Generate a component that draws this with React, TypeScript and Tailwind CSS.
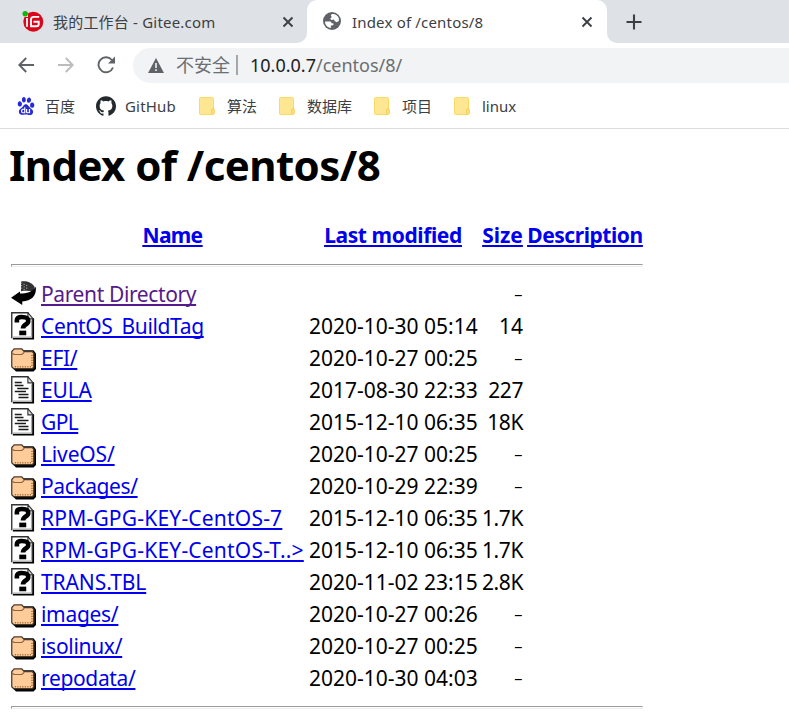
import React from "react";
import { SiBaidu, SiGithub } from "react-icons/si";

type Kind = "back" | "unknown" | "folder" | "text";

interface Entry {
  kind: Kind;
  name: string;
  track: string;
  date: string;
  size: string;
}

const entries: Entry[] = [
  { kind: "back", name: "Parent Directory", track: "tracking-[-0.38px]", date: "", size: "-" },
  { kind: "unknown", name: "CentOS_BuildTag", track: "tracking-[-0.35px]", date: "2020-10-30 05:14", size: "14" },
  { kind: "folder", name: "EFI/", track: "tracking-[-0.3px]", date: "2020-10-27 00:25", size: "-" },
  { kind: "text", name: "EULA", track: "tracking-[-0.2px]", date: "2017-08-30 22:33", size: "227" },
  { kind: "text", name: "GPL", track: "tracking-[-0.6px]", date: "2015-12-10 06:35", size: "18K" },
  { kind: "folder", name: "LiveOS/", track: "tracking-[-0.15px]", date: "2020-10-27 00:25", size: "-" },
  { kind: "folder", name: "Packages/", track: "tracking-[-0.4px]", date: "2020-10-29 22:39", size: "-" },
  { kind: "unknown", name: "RPM-GPG-KEY-CentOS-7", track: "tracking-[0.2px]", date: "2015-12-10 06:35", size: "1.7K" },
  { kind: "unknown", name: "RPM-GPG-KEY-CentOS-T..>", track: "tracking-[0.2px]", date: "2015-12-10 06:35", size: "1.7K" },
  { kind: "unknown", name: "TRANS.TBL", track: "tracking-[-0.1px]", date: "2020-11-02 23:15", size: "2.8K" },
  { kind: "folder", name: "images/", track: "tracking-[-0.3px]", date: "2020-10-27 00:26", size: "-" },
  { kind: "folder", name: "isolinux/", track: "tracking-[-0.3px]", date: "2020-10-27 00:25", size: "-" },
  { kind: "folder", name: "repodata/", track: "tracking-[-0.35px]", date: "2020-10-30 04:03", size: "-" },
];

function Page({ children }: { children: React.ReactNode }) {
  return (
    <>
      <path d="M1 1H14L18 5.5V21H1Z" fill="#fff" />
      <path d="M17.7 5V21.3H1.5" fill="none" stroke="#000" strokeWidth="1.5" />
      <path d="M.6 21V.6H14" fill="none" stroke="#333" strokeWidth="1.1" />
      <path d="M13.5 .5V5.5H17.8Z" fill="#ddd" stroke="#333" strokeWidth=".9" />
      <path d="M1.5 20H16.4V6.5" fill="none" stroke="#aaa" strokeWidth=".9" />
      {children}
    </>
  );
}

function FileIcon({ kind }: { kind: Kind }) {
  return (
    <svg viewBox="0 0 20 22" className="mb-[2px] block h-[27.5px] w-[25px]">
      {kind === "back" && (
        <>
          <path d="M8 1.2C12 .4 17 2 19 5.6L18 9C15 8.6 11 8.4 8 9Z" fill="#333" />
          <path d="M8 2.5H9M8 4.5H9M8 6.5H9M10 3.5H11M10 5.5H11M10 7.5H11M12 4.5H13M12 6.5H13" stroke="#aaa" strokeWidth=".8" />
          <path d="M19.9 5.8C20.4 12.5 17 16.6 9 17.2V20L0 14.2L7.2 9.2V10.8C12.5 10.8 17.2 9.6 19.4 5.8Z" fill="#000" />
        </>
      )}
      {kind === "unknown" && (
        <Page>
          <path d="M4.7 8.4V6.6C4.7 4.6 6 4 8.6 4C12.2 4 13.8 4.8 13.8 7.2C13.8 10.4 9.6 9.6 9.6 13.2" fill="none" stroke="#000" strokeWidth="3.7" />
          <path d="M6.6 14.9H12.2V18.6H6.6Z" fill="#000" />
        </Page>
      )}
      {kind === "text" && (
        <Page>
          <path d="M3 5.2H8.6M3 7.6H10M5 10H14M3 12.4H12M6 14.8H14M6 17.2H14" stroke="#1a1a1a" strokeWidth="1.3" />
          <path d="M3 6.4H9" stroke="#bbb" strokeWidth=".8" />
        </Page>
      )}
      {kind === "folder" && (
        <>
          <path d="M2 5H18L20 7.5V20L18 22H4L2 20Z" fill="#000" />
          <path d="M.6 6L2.6 3.9H8.6L10.6 6H17L18.2 7.4V18.5L17 19.6H2L.6 18.2Z" fill="#fc9" stroke="#4a3a2c" strokeWidth="1" />
          <path d="M1 7.2L2.3 8.4H8.7L10.6 6.6" fill="none" stroke="#8a6544" strokeWidth=".9" />
          <path d="M3 18.2H16.5" stroke="#a87448" strokeWidth="1.3" strokeDasharray="1 1" />
          <path d="M16.8 8.5V18" stroke="#a87448" strokeWidth="1.3" strokeDasharray="1 1" />
        </>
      )}
    </svg>
  );
}

function Cross() {
  return (
    <svg viewBox="0 0 12 12" className="block size-3">
      <path d="M1.5 1.5L10.5 10.5M10.5 1.5L1.5 10.5" stroke="#3c4043" strokeWidth="1.9" />
    </svg>
  );
}

function FolderMark() {
  return (
    <svg viewBox="0 0 16 18" className="block h-[18px] w-4">
      <rect x=".5" y=".5" width="14" height="17" rx="1" fill="#ffe693" stroke="#fbd964" />
      <rect x="12.7" y="11.7" width="2.6" height="5.3" rx=".8" fill="#ffe180" stroke="#f3cc4c" strokeWidth=".9" />
    </svg>
  );
}

function Rule() {
  return <div className="h-[3px] w-[632px] border border-t-[#9a9a9a] border-r-[#eee] border-b-[#eee] border-l-[#9a9a9a]" />;
}

const columns = "grid grid-cols-[26px_264px_169px_41px_116px] gap-x-1";

export default function App() {
  return (
    <div className="h-[720px] w-[789px] overflow-hidden bg-white font-['Noto_Sans','Noto_Sans_CJK_SC',sans-serif] whitespace-nowrap text-black">
      <div className="flex h-[43px] bg-[#dee1e6] text-[15px] text-[#3c4043]">
        <div className="flex w-[307px] items-center bg-white">
          <div className="flex h-full w-full items-center rounded-br-[10px] bg-[#dee1e6] pl-[22px]">
            <svg viewBox="0 0 22 22" className="size-[22px]">
              <circle cx="11.3" cy="10.7" r="10" fill="#d9071b" />
              <path d="M17.2 5.9H11.7Q9 5.9 9 8.6V15.3H14.6Q16.7 15.3 16.7 13.2V10.7H11.5" fill="none" stroke="#fff" strokeWidth="1.9" />
              <path d="M5 7V15.8" stroke="#fff" strokeWidth="1.8" />
              <path d="M0 0H6V6H0Z" fill="#dee1e6" />
              <circle cx="3.2" cy="2.8" r="2.7" fill="#0cb80c" />
            </svg>
            <span className="ml-[9px] w-[229px] pt-px tracking-[0.2px]">我的工作台 - Gitee.com</span>
            <Cross />
          </div>
        </div>
        <div className="flex w-[300px] items-center rounded-t-[10px] bg-white pl-[16px]">
          <svg viewBox="0 0 18 18" className="mb-px size-[18px]">
            <circle cx="9" cy="9" r="9" fill="#5f6368" />
            <path d="M8.6 2.2C12 1.6 14.8 3.4 15.8 6.2L15.9 9L13.6 10.2L11.6 8.9L10.9 7.6L8.2 8L7.2 6.4L8.8 5.2L7.8 3.6ZM2 9.4L7.6 9.6L8.8 11.2L10.6 11.6L10.3 13.2L8 13.6L7.8 15.9C4.6 15.6 2 12.8 2 9.4Z" fill="#fff" />
          </svg>
          <span className="ml-[11px] w-[229px] pt-px tracking-[0.18px]">Index of /centos/8</span>
          <Cross />
        </div>
        <div className="flex flex-1 bg-white">
          <div className="flex flex-1 items-center rounded-bl-[10px] bg-[#dee1e6] pl-[19px]">
            <svg viewBox="0 0 16 16" className="size-4">
              <path d="M8 .5V15.5M.5 8H15.5" stroke="#3c4043" strokeWidth="2.1" />
            </svg>
          </div>
        </div>
      </div>

      <div className="flex h-[44px] items-center pl-[17.5px]">
        <svg viewBox="0 0 16 16" className="size-4 shrink-0" fill="none" stroke="#5f6368" strokeWidth="1.9">
          <path d="M16 8H1.5M8.2 1L1.3 8L8.2 15" />
        </svg>
        <svg viewBox="0 0 16 16" className="ml-6 size-4 shrink-0" fill="none" stroke="#babcbe" strokeWidth="1.9">
          <path d="M0 8H14.5M7.8 1L14.7 8L7.8 15" />
        </svg>
        <svg viewBox="0 0 18 18" className="ml-[23.5px] size-[18px] shrink-0">
          <path d="M14.8 4A7.5 7.5 0 1 0 16 11.5" fill="none" stroke="#5f6368" strokeWidth="1.9" />
          <path d="M18 .5V7.5H11Z" fill="#5f6368" />
        </svg>
        <div className="ml-[18px] flex h-[35px] flex-1 items-center rounded-l-full bg-[#f1f3f4] pl-[15px] text-[18px] text-[#6b6e72]">
          <svg viewBox="0 0 16 15" className="mt-px h-[15px] w-4">
            <path d="M8 0L16 15H0Z" fill="#5f6368" />
            <path d="M8 5V10M8 11.3V13" stroke="#f1f3f4" strokeWidth="1.6" />
          </svg>
          <span className="ml-3">不安全</span>
          <span className="ml-[6px] h-5 w-[2px] bg-[#a3a6aa]" />
          <span className="ml-[12px]">
            <span className="text-[#202124]">10.0.0.7</span>/centos/8/
          </span>
        </div>
      </div>

      <div className="flex h-[42px] items-center border-b border-[#dadce0] pb-[3px] text-[15px] text-[#3c4043]">
        <div className="flex w-[78px] items-center pl-[17px]">
          <SiBaidu className="size-[18px] text-[#2529d8]" />
          <span className="ml-[10px]">百度</span>
        </div>
        <div className="ml-[18px] flex w-[102px] items-center">
          <SiGithub className="size-5 text-[#24292e]" />
          <span className="ml-[9px] tracking-[0.2px]">GitHub</span>
        </div>
        <div className="ml-px flex w-20 items-center gap-3"><FolderMark />算法</div>
        <div className="flex w-[95px] items-center gap-3"><FolderMark />数据库</div>
        <div className="flex w-20 items-center gap-3"><FolderMark />项目</div>
        <div className="flex items-center gap-3"><FolderMark />linux</div>
      </div>

      <div className="pl-[11px] text-[21px] [text-decoration-skip-ink:none]">
        <h1 className="-ml-[2px] h-[93px] pt-[7px] text-[42px] leading-[58px] font-bold tracking-[-0.58px]">Index of /centos/8</h1>
        <div className={`${columns} h-[42px] text-center leading-[27px] font-bold text-[#0000ee] underline`}>
          <span />
          <a className="-ml-px tracking-[-0.7px]">Name</a>
          <a className="-ml-px tracking-[-0.4px]">Last modified</a>
          <a className="tracking-[-0.1px]">Size</a>
          <a className="tracking-[-0.45px]">Description</a>
        </div>
        <Rule />
        <div className="h-[439px] pt-[12px]">
          {entries.map((e) => (
            <div key={e.name} className={`${columns} h-8 items-center`}>
              <FileIcon kind={e.kind} />
              <span>
                <a className={`underline ${e.track} ${e.kind === "back" ? "text-[#551a8b]" : "text-[#0000ee]"}`}>{e.name}</a>
              </span>
              <span>{e.date}</span>
              <span className="flex justify-end">
                <span className={e.size === "-" ? "origin-right scale-x-[1.35] font-light" : e.size.length > 2 ? "tracking-[-0.4px]" : ""}>{e.size}</span>
              </span>
            </div>
          ))}
        </div>
        <Rule />
      </div>
    </div>
  );
}
